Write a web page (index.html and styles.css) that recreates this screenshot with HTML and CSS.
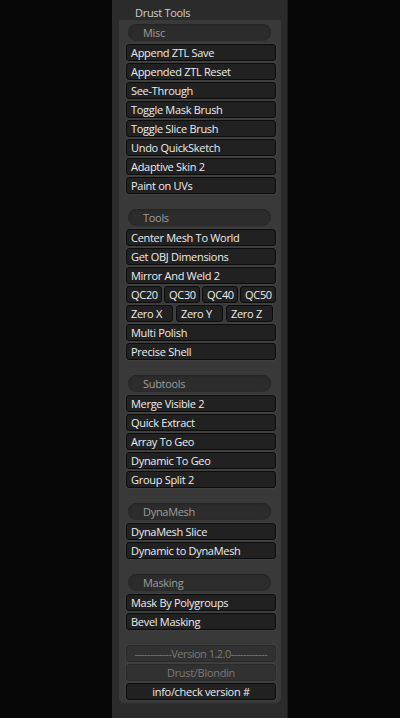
FILE: index.html
```html
<!DOCTYPE html>
<html lang="en">
<head>
    <meta charset="UTF-8">
    <meta name="viewport" content="width=device-width, initial-scale=1.0">
    <title>Drust Tools</title>
    <link rel="stylesheet" href="styles.css">
</head>
<body>
    <div class="palette">
        <div class="palette-title">Drust Tools</div>

        <div class="palette-body">
            <div class="section">
                <div class="section-head">Misc</div>
                <button class="btn">Append ZTL Save</button>
                <button class="btn">Appended ZTL Reset</button>
                <button class="btn">See-Through</button>
                <button class="btn">Toggle Mask Brush</button>
                <button class="btn">Toggle Slice Brush</button>
                <button class="btn">Undo QuickSketch</button>
                <button class="btn">Adaptive Skin 2</button>
                <button class="btn">Paint on UVs</button>
            </div>

            <div class="section">
                <div class="section-head">Tools</div>
                <button class="btn">Center Mesh To World</button>
                <button class="btn">Get OBJ Dimensions</button>
                <button class="btn">Mirror And Weld 2</button>
                <div class="row row-4">
                    <button class="btn">QC20</button>
                    <button class="btn">QC30</button>
                    <button class="btn">QC40</button>
                    <button class="btn">QC50</button>
                </div>
                <div class="row row-3">
                    <button class="btn">Zero X</button>
                    <button class="btn">Zero Y</button>
                    <button class="btn">Zero Z</button>
                </div>
                <button class="btn">Multi Polish</button>
                <button class="btn">Precise Shell</button>
            </div>

            <div class="section">
                <div class="section-head">Subtools</div>
                <button class="btn">Merge Visible 2</button>
                <button class="btn">Quick Extract</button>
                <button class="btn">Array To Geo</button>
                <button class="btn">Dynamic To Geo</button>
                <button class="btn">Group Split 2</button>
            </div>

            <div class="section">
                <div class="section-head">DynaMesh</div>
                <button class="btn">DynaMesh Slice</button>
                <button class="btn">Dynamic to DynaMesh</button>
            </div>

            <div class="section">
                <div class="section-head">Masking</div>
                <button class="btn">Mask By Polygroups</button>
                <button class="btn">Bevel Masking</button>
            </div>

            <div class="section last">
                <button class="btn btn-center btn-version" disabled>------------Version 1.2.0------------</button>
                <button class="btn btn-center" disabled>Drust/Blondin</button>
                <button class="btn btn-center">info/check version #</button>
            </div>
        </div>
    </div>
</body>
</html>
```

FILE: styles.css
```css
body {
    margin: 0;
    background-color: #070707;
    font-family: "Open Sans", "Noto Sans", sans-serif;
    font-size: 11px;
    letter-spacing: -0.3px;
}

.palette {
    width: 175px;
    height: 718px;
    margin-left: 112px;
    background-color: #2b2b2b;
    box-shadow: 1px 0 0 #1c1c1c;
}

.palette-title {
    height: 20px;
    box-sizing: border-box;
    padding: 5px 0 0 23px;
    line-height: 15px;
    color: #cfcfcf;
}

.palette-body {
    margin: 0 6px 0 7px;
    padding: 4px 5px 1px 7px;
    background-color: #393939;
    border-radius: 0 0 6px 6px;
    box-shadow: 0 1px 0 #303030;
}

.section {
    display: flex;
    flex-direction: column;
    margin-bottom: 13px;
}

.section.last {
    margin-bottom: 0;
}

.section-head {
    height: 17px;
    box-sizing: border-box;
    margin: 0 5px 3px 2px;
    padding-left: 15px;
    line-height: 17px;
    border-radius: 9px;
    background-color: #2c2c2c;
    box-shadow: inset 0 1px 2px #232323;
    color: #9c9c9c;
}

.btn {
    display: block;
    width: 100%;
    height: 17px;
    box-sizing: border-box;
    margin: 0 0 2px 0;
    padding: 0 0 0 4px;
    border: 1px solid #0c0c0c;
    border-radius: 3px;
    background-color: #212121;
    box-shadow: 0 0 0 1px #3f3f3f;
    color: #ededed;
    font-family: inherit;
    font-size: 11px;
    letter-spacing: inherit;
    line-height: 15px;
    text-align: left;
    white-space: nowrap;
    overflow: hidden;
}

.btn:disabled {
    background-color: #313131;
    border-color: #2a2a2a;
    color: #7a7a7a;
}

.btn-center {
    text-align: center;
    padding: 0;
}

.btn-version {
    letter-spacing: -0.5px;
}

.row {
    display: grid;
    margin-bottom: 2px;
}

.row .btn {
    margin: 0;
}

.row-4 {
    grid-template-columns: repeat(4, 36px);
    column-gap: 2px;
}

.row-3 {
    grid-template-columns: repeat(3, 47px);
    column-gap: 3px;
}
```
